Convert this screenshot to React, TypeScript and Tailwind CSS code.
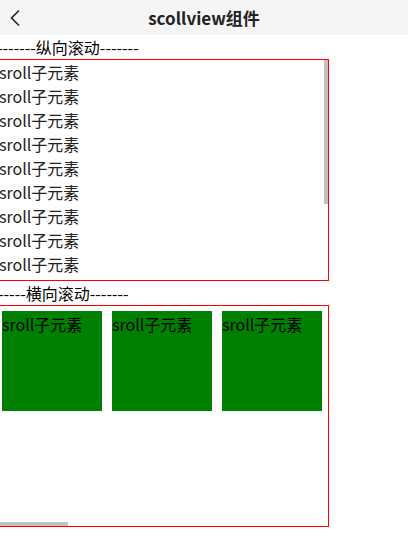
const items = Array.from({ length: 14 }, (_, i) => i)
const cells = Array.from({ length: 16 }, (_, i) => i)

export default function App() {
    return <div className="w-[408px] h-[550px] bg-white overflow-hidden text-black" style={{ fontFamily: '"Noto Sans CJK SC", "Noto Sans", sans-serif' }}>
        <div className="grid grid-cols-[40px_1fr_40px] items-center h-[35px] bg-[#f5f5f5]">
            <div className="pl-[9px] flex items-center">
                <svg width="12" height="18" viewBox="0 0 12 18" fill="none">
                    <path d="M10 1.5 L2.5 9 L10 16.5" stroke="#222" strokeWidth="1.6" />
                </svg>
            </div>
            <div className="text-center text-[17px] font-bold text-[#222] leading-[35px]">
                scollview组件
            </div>
            <div />
        </div>
        <div className="-ml-[2px] w-[331px]">
            <div className="h-[24px] leading-[24px] text-[16px] -ml-[1px] whitespace-nowrap">
                -------纵向滚动-------
            </div>
            <div className="relative h-[222px] border border-[#ff0000] overflow-hidden">
                {items.map(i =>
                    <div key={i} className="h-[24px] leading-[24px] text-[16px] text-[#222] whitespace-nowrap">
                        sroll子元素
                    </div>
                )}
                <div className="absolute right-0 top-0 w-[4px] h-[144px] bg-[#c1c1c1]" />
            </div>
            <div className="h-[24px] leading-[24px] text-[16px] whitespace-nowrap">
                -----横向滚动-------
            </div>
            <div className="relative h-[222px] border border-[#ff0000] overflow-hidden">
                <div className="flex gap-[10px] pt-[5px] pl-[3px]">
                    {cells.map(i =>
                        <div key={i} className="w-[100px] h-[100px] shrink-0 bg-[#008000] text-[16px] leading-[26px] whitespace-nowrap">
                            sroll子元素
                        </div>
                    )}
                </div>
                <div className="absolute left-[1px] bottom-0 w-[68px] h-[4px] bg-[#c1c1c1]" />
            </div>
        </div>
    </div>
}
